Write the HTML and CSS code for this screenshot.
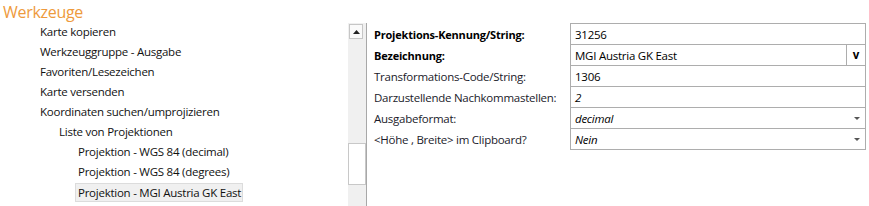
FILE: index.html
```html
<!DOCTYPE html>
<html lang="de">
<head>
<meta charset="utf-8">
<title>Werkzeuge</title>
<link rel="stylesheet" href="styles.css">
</head>
<body>
<div class="app">
  <h1 class="title">Werkzeuge</h1>
  <div class="main">
    <ul class="tree">
      <li class="item lvl0">Karte kopieren</li>
      <li class="item lvl0">Werkzeuggruppe - Ausgabe</li>
      <li class="item lvl0">Favoriten/Lesezeichen</li>
      <li class="item lvl0">Karte versenden</li>
      <li class="item lvl0">Koordinaten suchen/umprojizieren</li>
      <li class="item lvl1">Liste von Projektionen</li>
      <li class="item lvl2">Projektion - WGS 84 (decimal)</li>
      <li class="item lvl2">Projektion - WGS 84 (degrees)</li>
      <li class="item lvl2"><span class="selected">Projektion - MGI Austria GK East</span></li>
    </ul>
    <div class="scrollbar">
      <div class="sb-up"><svg width="7" height="4" viewBox="0 0 7 4"><polygon points="0,4 7,4 3.5,0" fill="#222"/></svg></div>
      <div class="sb-thumb"></div>
    </div>
    <div class="divider"></div>
    <div class="form">
      <div class="label bold">Projektions-Kennung/String:</div>
      <div class="value">31256</div>
      <div class="label bold">Bezeichnung:</div>
      <div class="value split"><span class="text">MGI Austria GK East</span><span class="vbtn">v</span></div>
      <div class="label">Transformations-Code/String:</div>
      <div class="value">1306</div>
      <div class="label">Darzustellende Nachkommastellen:</div>
      <div class="value italic">2</div>
      <div class="label">Ausgabeformat:</div>
      <div class="value italic combo"><span class="text">decimal</span><svg class="arrow" width="6" height="3" viewBox="0 0 6 3"><polygon points="0,0 6,0 3,3" fill="#555"/></svg></div>
      <div class="label">&lt;Höhe , Breite&gt; im Clipboard?</div>
      <div class="value italic combo"><span class="text">Nein</span><svg class="arrow" width="6" height="3" viewBox="0 0 6 3"><polygon points="0,0 6,0 3,3" fill="#555"/></svg></div>
    </div>
  </div>
</div>
</body>
</html>
```

FILE: styles.css
```css
html, body {
  margin: 0;
  padding: 0;
  background: #ffffff;
}
body {
  font-family: "Open Sans", "Noto Sans", sans-serif;
  font-size: 11.5px;
  letter-spacing: -0.25px;
  color: #111;
  width: 869px;
  height: 206px;
  overflow: hidden;
}
.title {
  margin: 0;
  padding-left: 3px;
  height: 22px;
  line-height: 24px;
  font-size: 16px;
  letter-spacing: -0.3px;
  font-weight: 400;
  color: #ee9a3c;
}
.main {
  display: flex;
  height: 184px;
}
.tree {
  list-style: none;
  margin: 0;
  padding: 0;
  width: 348px;
}
.item {
  height: 20px;
  line-height: 20px;
  white-space: nowrap;
}
.lvl0 { padding-left: 40px; }
.lvl1 { padding-left: 59px; }
.lvl2 { padding-left: 78px; }
.selected {
  display: inline-block;
  margin-left: -3px;
  padding: 0 2px;
  height: 19px;
  line-height: 17px;
  margin-top: 1px;
  background: #f0f0f0;
  border: 1px solid #dcdcdc;
  box-sizing: border-box;
  width: 168px;
  vertical-align: top;
}
.scrollbar {
  width: 18px;
  margin-top: 1px;
  background: #f0f0f0;
}
.sb-up {
  margin: 1px 0 0 1px;
  width: 14px;
  height: 15px;
  box-sizing: border-box;
  border: 1px solid #c6c6c6;
  background: #fafafa;
  display: flex;
  align-items: center;
  justify-content: center;
}
.sb-thumb {
  margin: 104px 0 0 0;
  width: 18px;
  height: 42px;
  box-sizing: border-box;
  border: 1px solid #c8c8c8;
  background: #ffffff;
}
.divider {
  width: 1px;
  margin-top: 1px;
  background: #a8a8a8;
}
.form {
  margin-top: 1px;
  margin-left: 7px;
  display: grid;
  grid-template-columns: 196px 296px;
  grid-auto-rows: 21px;
  align-content: start;
}
.label {
  line-height: 23px;
  white-space: nowrap;
  color: #1a1a2a;
}
.bold {
  font-weight: 700;
  font-size: 11px;
  letter-spacing: -0.2px;
  color: #000;
}
.value {
  border: 1px solid #adadad;
  border-bottom: none;
  height: 21px;
  box-sizing: border-box;
  padding-left: 4px;
  line-height: 19px;
  color: #000;
  display: flex;
  align-items: center;
}
.value:last-child {
  border-bottom: 1px solid #adadad;
  height: 22px;
}
.italic {
  font-style: italic;
}
.split .text, .combo .text {
  flex: 1;
}
.vbtn {
  width: 19px;
  height: 100%;
  border-left: 1px solid #adadad;
  box-sizing: border-box;
  font-weight: 700;
  font-style: normal;
  text-align: center;
  line-height: 19px;
}
.arrow {
  margin-right: 5px;
}
```
